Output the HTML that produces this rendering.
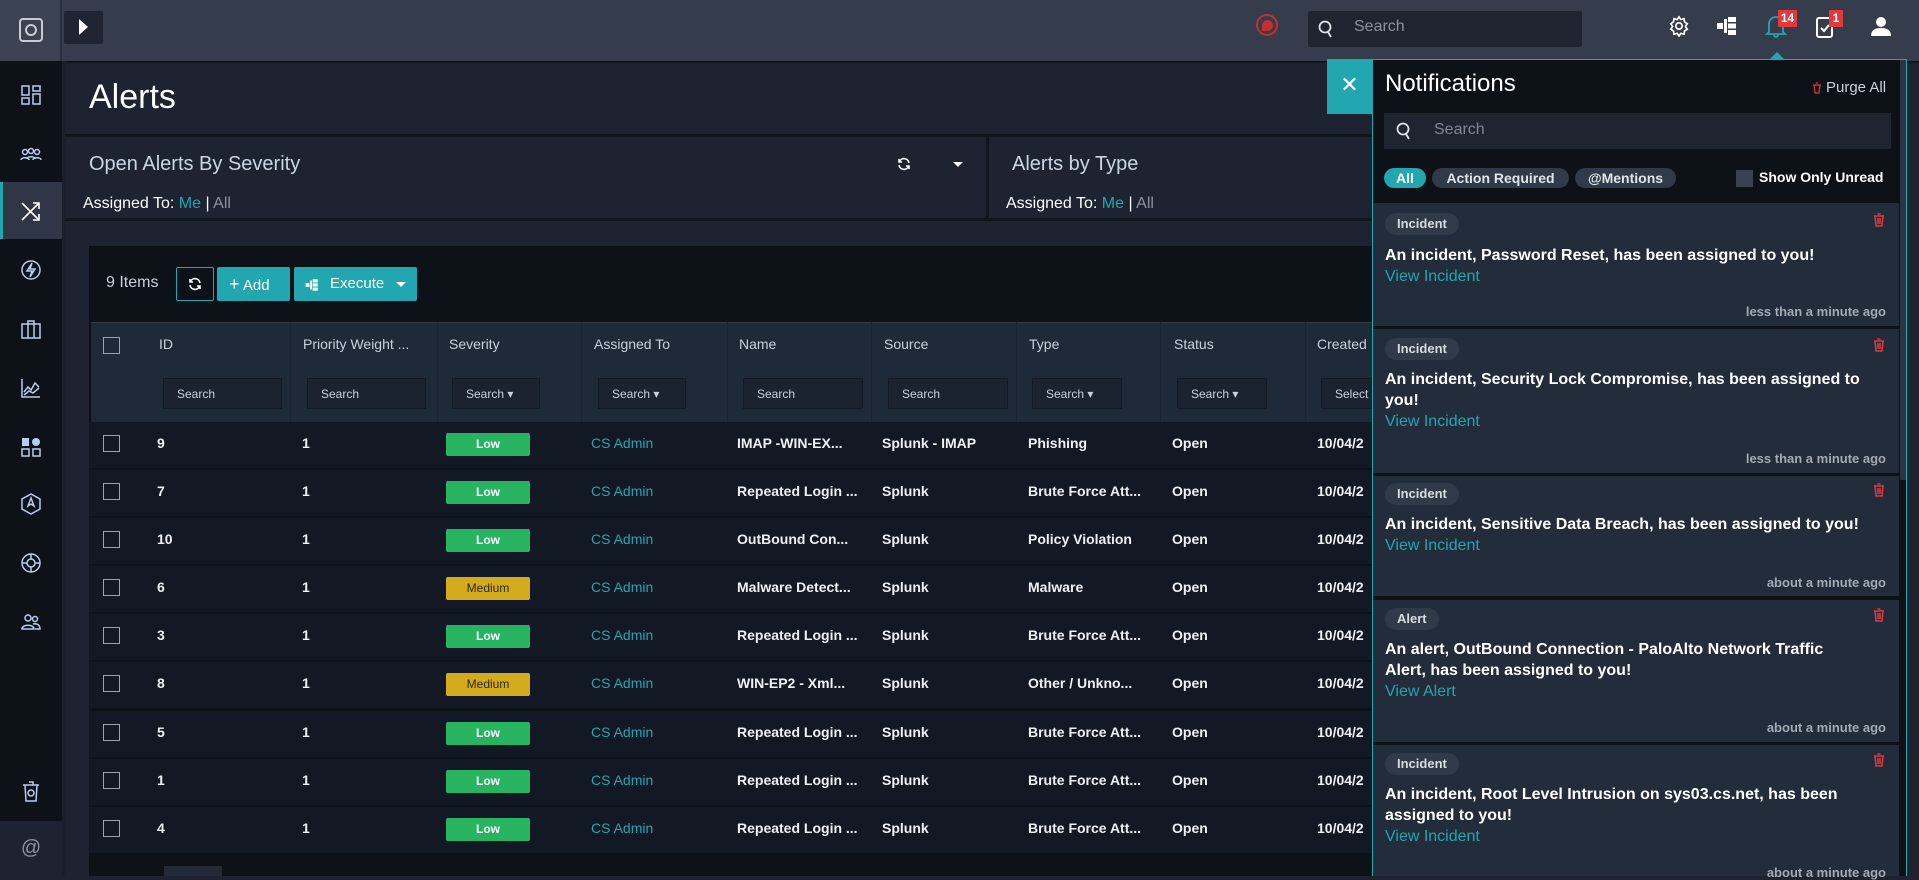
<!DOCTYPE html>
<html><head><meta charset="utf-8"><style>
*{margin:0;padding:0;box-sizing:border-box}
body{width:1919px;height:876px;overflow:hidden;background:#1d2330;font-family:"Liberation Sans",sans-serif;color:#e8ecf1;position:relative}
.a{position:absolute;white-space:nowrap}
.sb{left:0;top:61px;width:62px;height:815px;background:#0d1118}
.ic{position:absolute;left:19px;width:24px;height:24px}
.hdr{color:#c9d1db;font-size:14px}
.srch{position:absolute;top:378px;height:31px;background:#1b2230;border:1px solid #141a24;color:#c9d1db;font-size:12px;padding:8px 13px;white-space:nowrap}
.row{position:absolute;left:89px;width:1300px;height:47px;background:#131924;border-bottom:1px solid #0c1017}
.t{position:absolute;white-space:nowrap;font-weight:bold;font-size:14px;color:#eef1f4}
.cb{position:absolute;left:103px;width:17px;height:17px;border:1px solid #9aa3ae}
.bd{position:absolute;left:446px;width:84px;height:23px;border-radius:2px;font-size:12px;font-weight:bold;text-align:center;line-height:23px}
.low{background:#27b35f;color:#fff}.med{background:#d4ab1d;color:#2a2a10;font-weight:normal}
.card{position:absolute;left:1373px;width:526px;background:#222c3b}
.tag{position:absolute;left:12px;height:22px;padding:0 12px;border-radius:11px;background:#303a48;color:#d7dce2;font-size:13px;font-weight:bold;line-height:22px}
.msg{position:absolute;left:12px;width:480px;font-size:16px;font-weight:bold;line-height:21px;color:#fff}
.lnk{color:#22a6b0;font-weight:normal;display:block}
.tm{position:absolute;right:13px;font-size:13px;font-weight:bold;color:#a3aab4}
.tr{position:absolute;right:14px;width:12px;height:14px}
</style></head><body>
<div class="a" style="left:0;top:0;width:1919px;height:61px;background:#353c4b"></div>
<div class="a" style="left:0;top:0;width:62px;height:61px;background:#3b4251;border-right:2px solid #2a303c"></div>
<div class="a" style="left:19px;top:18px;width:24px;height:24px;border:2px solid #c8ccd2;border-radius:4px"></div>
<div class="a" style="left:25px;top:24px;width:12px;height:12px;border:2px solid #c8ccd2;border-radius:50%"></div>
<div class="a" style="left:64px;top:11px;width:39px;height:33px;background:#1e2431;border-radius:2px"></div>
<div class="a" style="left:79px;top:19px;width:0;height:0;border-left:9px solid #fff;border-top:8px solid transparent;border-bottom:8px solid transparent"></div>
<div class="a" style="left:1256px;top:14px;width:22px;height:22px;border:2px solid #c3302e;border-radius:50%"></div>
<div class="a" style="left:1262px;top:20px;width:11px;height:11px;background:#c3302e;border-radius:50% 50% 50% 0"></div>
<div class="a" style="left:1308px;top:11px;width:274px;height:36px;background:#1e2430;border-radius:2px"></div>
<svg class="a" style="left:1318px;top:20px" width="16" height="18" viewBox="0 0 16 18" fill="none" stroke="#e0e3e7" stroke-width="1.8"><circle cx="7" cy="7" r="5.5"/><path d="M10 12l3 5"/></svg>
<div class="a" style="left:1354px;top:18px;font-size:16px;color:#8c939e">Search</div>
<svg class="a" style="left:1668px;top:15px" width="22" height="22" viewBox="0 0 24 24" fill="none" stroke="#fff" stroke-width="1.8"><circle cx="12" cy="12" r="3.5"/><path d="M12 2l2 3 3.5-1 .5 3.5 3 2-2 3 2 3-3 2-.5 3.5-3.5-1-2 3-2-3-3.5 1-.5-3.5-3-2 2-3-2-3 3-2 .5-3.5 3.5 1z"/></svg>
<svg class="a" style="left:1716px;top:15px" width="22" height="22" viewBox="0 0 22 22" fill="#fff"><rect x="1" y="8" width="6" height="6"/><rect x="12" y="2" width="8" height="5"/><rect x="12" y="8.5" width="8" height="5"/><rect x="12" y="15" width="8" height="5"/><rect x="8" y="4" width="3" height="14"/></svg>
<svg class="a" style="left:1765px;top:14px" width="22" height="24" viewBox="0 0 22 24" fill="none" stroke="#22a6b0" stroke-width="1.8"><path d="M4 18V10a7 7 0 0114 0v8l2 2H2z"/><path d="M9 21a2 2 0 004 0"/></svg>
<div class="a" style="left:1778px;top:10px;width:19px;height:17px;background:#e03a3e;color:#fff;font-size:12px;font-weight:bold;text-align:center;line-height:17px">14</div>
<svg class="a" style="left:1815px;top:15px" width="20" height="24" viewBox="0 0 20 24" fill="none" stroke="#fff" stroke-width="2"><rect x="2" y="3" width="15" height="19" rx="2"/><path d="M6 13l3 3 5-6"/></svg>
<div class="a" style="left:1829px;top:10px;width:14px;height:17px;background:#e03a3e;color:#fff;font-size:12px;font-weight:bold;text-align:center;line-height:17px">1</div>
<svg class="a" style="left:1871px;top:16px" width="20" height="20" viewBox="0 0 20 20" fill="#fff"><circle cx="10" cy="6" r="5"/><path d="M0 20c0-6 4-8 10-8s10 2 10 8z"/></svg>
<div class="a" style="left:0;top:61px;width:1919px;height:2px;background:#11151d"></div>

<div class="a sb"></div>
<div class="a" style="left:62px;top:61px;width:3px;height:815px;background:#1a1f2a"></div>
<div class="a" style="left:0;top:182px;width:62px;height:57px;background:#2f3645;border-left:3px solid #22a6b0"></div>
<svg class="ic" style="top:83px" viewBox="0 0 24 24" fill="none" stroke="#b9cdf0" stroke-width="1.5"><rect x="3" y="3" width="7" height="9"/><rect x="14" y="3" width="7" height="5"/><rect x="3" y="15" width="7" height="6"/><rect x="14" y="11" width="7" height="10"/></svg>
<svg class="ic" style="top:143px" viewBox="0 0 24 24" fill="none" stroke="#b9cdf0" stroke-width="1.5"><circle cx="6" cy="9" r="2.5"/><circle cx="12" cy="8" r="2.5"/><circle cx="18" cy="9" r="2.5"/><path d="M2 17c0-3 8-3 8 0M8 16c0-3 8-3 8 0M14 17c0-3 8-3 8 0"/></svg>
<svg class="ic" style="top:199px" viewBox="0 0 24 24" fill="none" stroke="#fff" stroke-width="1.6"><path d="M3 4l17 17M3 21L20 4M14 4h6v6M14 21h6v-6"/></svg>
<svg class="ic" style="top:258px" viewBox="0 0 24 24" fill="none" stroke="#b9cdf0" stroke-width="1.5"><circle cx="12" cy="12" r="9"/><path d="M13 5l-5 8h5l-2 6 5-8h-5z"/></svg>
<svg class="ic" style="top:317px" viewBox="0 0 24 24" fill="none" stroke="#b9cdf0" stroke-width="1.5"><rect x="3" y="7" width="18" height="14"/><path d="M9 7V4h6v3M9 7v14M15 7v14"/></svg>
<svg class="ic" style="top:376px" viewBox="0 0 24 24" fill="none" stroke="#b9cdf0" stroke-width="1.5"><path d="M3 3v18h18M5 16l4-5 3 3 4-7 4 4M5 19l5-4 4 2 6-5"/></svg>
<svg class="ic" style="top:435px" viewBox="0 0 24 24" fill="#b9cdf0"><rect x="3" y="3" width="7" height="8"/><circle cx="17" cy="7" r="4"/><rect x="3" y="14" width="7" height="7" fill="none" stroke="#b9cdf0" stroke-width="1.5"/><rect x="14" y="14" width="7" height="7" fill="none" stroke="#b9cdf0" stroke-width="1.5"/></svg>
<svg class="ic" style="top:492px" viewBox="0 0 24 24" fill="none" stroke="#b9cdf0" stroke-width="1.5"><path d="M12 2l9 5v10l-9 5-9-5V7z"/><path d="M12 6l3 8-3-2-3 2z"/></svg>
<svg class="ic" style="top:551px" viewBox="0 0 24 24" fill="none" stroke="#b9cdf0" stroke-width="1.5"><circle cx="12" cy="12" r="9"/><circle cx="12" cy="12" r="4"/><path d="M12 3v5M12 16v5M3 12h5M16 12h5"/></svg>
<svg class="ic" style="top:610px" viewBox="0 0 24 24" fill="none" stroke="#b9cdf0" stroke-width="1.5"><circle cx="9" cy="8" r="3"/><circle cx="16" cy="9" r="2.5"/><path d="M3 19c0-5 12-5 12 0zM14 14c4-1 7 1 7 5h-5"/></svg>
<svg class="ic" style="top:779px" viewBox="0 0 24 24" fill="none" stroke="#b9cdf0" stroke-width="1.5"><path d="M6 6h12l-1 16H7zM4 6h16M10 3h4v3"/><circle cx="12" cy="14" r="3"/></svg>
<div class="a" style="left:0;top:821px;width:62px;height:55px;background:#1d2330;color:#8c939e;font-size:20px;text-align:center;line-height:55px">@</div>

<div class="a" style="left:65px;top:63px;width:1310px;height:72px;background:#1d2330"></div>
<div class="a" style="left:89px;top:78px;font-size:34px;color:#fff">Alerts</div>
<div class="a" style="left:65px;top:134px;width:1310px;height:3px;background:#11151d"></div>
<div class="a" style="left:65px;top:218px;width:1310px;height:3px;background:#11151d"></div>
<div class="a" style="left:986px;top:137px;width:3px;height:81px;background:#11151d"></div>
<div class="a" style="left:89px;top:153px;font-size:20px;color:#c9d6e6">Open Alerts By Severity</div>
<div class="a" style="left:83px;top:195px;font-size:16px;color:#fff">Assigned To: <span style="color:#22a6b0">Me</span> | <span style="color:#8c939e">All</span></div>
<svg class="a" style="left:897px;top:157px" width="14" height="14" viewBox="0 0 14 14" fill="none" stroke="#fff" stroke-width="1.6"><path d="M12 6A5 5 0 002.5 4.5M2 8a5 5 0 009.5 1.5"/><path d="M2 2v3h3M12 12V9H9"/></svg>
<div class="a" style="left:953px;top:162px;border-top:5px solid #fff;border-left:5px solid transparent;border-right:5px solid transparent"></div>
<div class="a" style="left:1012px;top:153px;font-size:20px;color:#c9d6e6">Alerts by Type</div>
<div class="a" style="left:1006px;top:195px;font-size:16px;color:#fff">Assigned To: <span style="color:#22a6b0">Me</span> | <span style="color:#8c939e">All</span></div>

<div class="a" style="left:89px;top:246px;width:1300px;height:630px;background:#0d1118"></div>
<div class="a" style="left:106px;top:274px;font-size:16px;color:#c9d1db">9 Items</div>
<div class="a" style="left:176px;top:267px;width:38px;height:34px;border:1px solid #22a6b0;border-radius:2px"></div>
<svg class="a" style="left:188px;top:277px" width="14" height="14" viewBox="0 0 14 14" fill="none" stroke="#fff" stroke-width="1.6"><path d="M12 6A5 5 0 002.5 4.5M2 8a5 5 0 009.5 1.5"/><path d="M2 2v3h3M12 12V9H9"/></svg>
<div class="a" style="left:217px;top:267px;width:73px;height:34px;background:#22a6b0;border-radius:2px;color:#fff;font-size:15px;line-height:34px;padding-left:12px"><b style="font-size:18px;font-weight:normal">+</b> Add</div>
<div class="a" style="left:294px;top:267px;width:123px;height:34px;background:#22a6b0;border-radius:2px;color:#fff;font-size:15px;line-height:34px;padding-left:36px">Execute</div>
<svg class="a" style="left:304px;top:278px" width="16" height="14" viewBox="0 0 22 22" fill="#fff"><rect x="1" y="8" width="6" height="6"/><rect x="12" y="2" width="8" height="5"/><rect x="12" y="8.5" width="8" height="5"/><rect x="12" y="15" width="8" height="5"/><rect x="8" y="4" width="3" height="14"/></svg>
<div class="a" style="left:396px;top:282px;border-top:5px solid #fff;border-left:5px solid transparent;border-right:5px solid transparent"></div>

<div class="a" style="left:91px;top:322px;width:1298px;height:100px;background:#1f2a38;border-top:1px solid #2e3a4a"></div>
<div class="a" style="left:290px;top:322px;width:1px;height:100px;background:#1a2330"></div>
<div class="a" style="left:437px;top:322px;width:1px;height:100px;background:#1a2330"></div>
<div class="a" style="left:581px;top:322px;width:1px;height:100px;background:#1a2330"></div>
<div class="a" style="left:727px;top:322px;width:1px;height:100px;background:#1a2330"></div>
<div class="a" style="left:871px;top:322px;width:1px;height:100px;background:#1a2330"></div>
<div class="a" style="left:1016px;top:322px;width:1px;height:100px;background:#1a2330"></div>
<div class="a" style="left:1160px;top:322px;width:1px;height:100px;background:#1a2330"></div>
<div class="a" style="left:1305px;top:322px;width:1px;height:100px;background:#1a2330"></div>
<div class="cb" style="top:337px"></div>
<div class="a hdr" style="left:159px;top:336px">ID</div>
<div class="a hdr" style="left:303px;top:336px">Priority Weight ...</div>
<div class="a hdr" style="left:449px;top:336px">Severity</div>
<div class="a hdr" style="left:594px;top:336px">Assigned To</div>
<div class="a hdr" style="left:739px;top:336px">Name</div>
<div class="a hdr" style="left:884px;top:336px">Source</div>
<div class="a hdr" style="left:1029px;top:336px">Type</div>
<div class="a hdr" style="left:1174px;top:336px">Status</div>
<div class="a hdr" style="left:1317px;top:336px">Created</div>
<div class="srch" style="left:163px;width:119px">Search</div>
<div class="srch" style="left:307px;width:119px">Search</div>
<div class="srch" style="left:452px;width:88px">Search ▾</div>
<div class="srch" style="left:598px;width:88px">Search ▾</div>
<div class="srch" style="left:743px;width:120px">Search</div>
<div class="srch" style="left:888px;width:120px">Search</div>
<div class="srch" style="left:1032px;width:90px">Search ▾</div>
<div class="srch" style="left:1177px;width:90px">Search ▾</div>
<div class="srch" style="left:1321px;width:60px">Select</div>

<div class="row" style="top:422px"></div><div class="row" style="top:470px"></div><div class="row" style="top:518px"></div>
<div class="row" style="top:566px"></div><div class="row" style="top:614px"></div><div class="row" style="top:662px"></div>
<div class="row" style="top:711px"></div><div class="row" style="top:759px"></div><div class="row" style="top:807px"></div>
<div class="a" style="left:164px;top:866px;width:58px;height:10px;background:#222a37"></div>

<div class="cb" style="top:435px"></div><div class="t" style="left:157px;top:435px">9</div><div class="t" style="left:302px;top:435px">1</div><div class="bd low" style="top:433px">Low</div><div class="t" style="left:591px;top:435px;font-weight:normal;color:#22a6b0">CS Admin</div><div class="t" style="left:737px;top:435px">IMAP -WIN-EX...</div><div class="t" style="left:882px;top:435px">Splunk - IMAP</div><div class="t" style="left:1028px;top:435px">Phishing</div><div class="t" style="left:1172px;top:435px">Open</div><div class="t" style="left:1317px;top:435px">10/04/2</div>
<div class="cb" style="top:483px"></div><div class="t" style="left:157px;top:483px">7</div><div class="t" style="left:302px;top:483px">1</div><div class="bd low" style="top:481px">Low</div><div class="t" style="left:591px;top:483px;font-weight:normal;color:#22a6b0">CS Admin</div><div class="t" style="left:737px;top:483px">Repeated Login ...</div><div class="t" style="left:882px;top:483px">Splunk</div><div class="t" style="left:1028px;top:483px">Brute Force Att...</div><div class="t" style="left:1172px;top:483px">Open</div><div class="t" style="left:1317px;top:483px">10/04/2</div>
<div class="cb" style="top:531px"></div><div class="t" style="left:157px;top:531px">10</div><div class="t" style="left:302px;top:531px">1</div><div class="bd low" style="top:529px">Low</div><div class="t" style="left:591px;top:531px;font-weight:normal;color:#22a6b0">CS Admin</div><div class="t" style="left:737px;top:531px">OutBound Con...</div><div class="t" style="left:882px;top:531px">Splunk</div><div class="t" style="left:1028px;top:531px">Policy Violation</div><div class="t" style="left:1172px;top:531px">Open</div><div class="t" style="left:1317px;top:531px">10/04/2</div>
<div class="cb" style="top:579px"></div><div class="t" style="left:157px;top:579px">6</div><div class="t" style="left:302px;top:579px">1</div><div class="bd med" style="top:577px">Medium</div><div class="t" style="left:591px;top:579px;font-weight:normal;color:#22a6b0">CS Admin</div><div class="t" style="left:737px;top:579px">Malware Detect...</div><div class="t" style="left:882px;top:579px">Splunk</div><div class="t" style="left:1028px;top:579px">Malware</div><div class="t" style="left:1172px;top:579px">Open</div><div class="t" style="left:1317px;top:579px">10/04/2</div>
<div class="cb" style="top:627px"></div><div class="t" style="left:157px;top:627px">3</div><div class="t" style="left:302px;top:627px">1</div><div class="bd low" style="top:625px">Low</div><div class="t" style="left:591px;top:627px;font-weight:normal;color:#22a6b0">CS Admin</div><div class="t" style="left:737px;top:627px">Repeated Login ...</div><div class="t" style="left:882px;top:627px">Splunk</div><div class="t" style="left:1028px;top:627px">Brute Force Att...</div><div class="t" style="left:1172px;top:627px">Open</div><div class="t" style="left:1317px;top:627px">10/04/2</div>
<div class="cb" style="top:675px"></div><div class="t" style="left:157px;top:675px">8</div><div class="t" style="left:302px;top:675px">1</div><div class="bd med" style="top:673px">Medium</div><div class="t" style="left:591px;top:675px;font-weight:normal;color:#22a6b0">CS Admin</div><div class="t" style="left:737px;top:675px">WIN-EP2 - Xml...</div><div class="t" style="left:882px;top:675px">Splunk</div><div class="t" style="left:1028px;top:675px">Other / Unkno...</div><div class="t" style="left:1172px;top:675px">Open</div><div class="t" style="left:1317px;top:675px">10/04/2</div>
<div class="cb" style="top:724px"></div><div class="t" style="left:157px;top:724px">5</div><div class="t" style="left:302px;top:724px">1</div><div class="bd low" style="top:722px">Low</div><div class="t" style="left:591px;top:724px;font-weight:normal;color:#22a6b0">CS Admin</div><div class="t" style="left:737px;top:724px">Repeated Login ...</div><div class="t" style="left:882px;top:724px">Splunk</div><div class="t" style="left:1028px;top:724px">Brute Force Att...</div><div class="t" style="left:1172px;top:724px">Open</div><div class="t" style="left:1317px;top:724px">10/04/2</div>
<div class="cb" style="top:772px"></div><div class="t" style="left:157px;top:772px">1</div><div class="t" style="left:302px;top:772px">1</div><div class="bd low" style="top:770px">Low</div><div class="t" style="left:591px;top:772px;font-weight:normal;color:#22a6b0">CS Admin</div><div class="t" style="left:737px;top:772px">Repeated Login ...</div><div class="t" style="left:882px;top:772px">Splunk</div><div class="t" style="left:1028px;top:772px">Brute Force Att...</div><div class="t" style="left:1172px;top:772px">Open</div><div class="t" style="left:1317px;top:772px">10/04/2</div>
<div class="cb" style="top:820px"></div><div class="t" style="left:157px;top:820px">4</div><div class="t" style="left:302px;top:820px">1</div><div class="bd low" style="top:818px">Low</div><div class="t" style="left:591px;top:820px;font-weight:normal;color:#22a6b0">CS Admin</div><div class="t" style="left:737px;top:820px">Repeated Login ...</div><div class="t" style="left:882px;top:820px">Splunk</div><div class="t" style="left:1028px;top:820px">Brute Force Att...</div><div class="t" style="left:1172px;top:820px">Open</div><div class="t" style="left:1317px;top:820px">10/04/2</div>

<div class="a" style="left:1327px;top:59px;width:45px;height:55px;background:#22a6b0;color:#fff;font-size:22px;text-align:center;line-height:52px">✕</div>
<div class="a" style="left:1770px;top:52px;border-bottom:7px solid #22a6b0;border-left:7px solid transparent;border-right:7px solid transparent"></div>
<div class="a" style="left:1372px;top:59px;width:535px;height:817px;background:#0d1118;border:1px solid #22a6b0;border-bottom:none"></div>
<div class="a" style="left:1900px;top:60px;width:6px;height:420px;background:#2e3542"></div>
<div class="a" style="left:1385px;top:70px;font-size:24px;color:#fff">Notifications</div>
<svg class="a" style="left:1812px;top:82px" width="10" height="12" viewBox="0 0 10 12" fill="none" stroke="#c3302e" stroke-width="1.5"><path d="M1 3h8M2 3l1 8h4l1-8M4 1h2"/></svg>
<div class="a" style="left:1826px;top:79px;font-size:15px;color:#c9d1db">Purge All</div>
<div class="a" style="left:1384px;top:113px;width:507px;height:36px;background:#1e2430"></div>
<svg class="a" style="left:1396px;top:122px" width="16" height="18" viewBox="0 0 16 18" fill="none" stroke="#e0e3e7" stroke-width="1.8"><circle cx="7" cy="7" r="5.5"/><path d="M10 12l3 5"/></svg>
<div class="a" style="left:1434px;top:121px;font-size:16px;color:#7f8792">Search</div>
<div class="a" style="left:1384px;top:168px;width:42px;height:20px;background:#22a6b0;border-radius:10px;color:#fff;font-size:14px;font-weight:bold;text-align:center;line-height:20px">All</div>
<div class="a" style="left:1432px;top:168px;width:137px;height:20px;background:#303a48;border-radius:10px;color:#e1e5ea;font-size:14px;font-weight:bold;text-align:center;line-height:20px">Action Required</div>
<div class="a" style="left:1575px;top:168px;width:101px;height:20px;background:#303a48;border-radius:10px;color:#e1e5ea;font-size:14px;font-weight:bold;text-align:center;line-height:20px">@Mentions</div>
<div class="a" style="left:1736px;top:170px;width:17px;height:17px;background:#3a4250"></div>
<div class="a" style="left:1759px;top:169px;font-size:14px;font-weight:bold;color:#fff">Show Only Unread</div>

<div class="card" style="top:203px;height:123px"><div class="tag" style="top:10px">Incident</div><svg class="tr" style="top:10px" viewBox="0 0 12 14" fill="none" stroke="#e03a3e" stroke-width="1.5"><path d="M1 3h10M2 3l1 10h6l1-10M4.5 1h3M5 5v6M7 5v6"/></svg><div class="msg" style="top:42px;width:510px">An incident, Password Reset, has been assigned to you!<span class="lnk">View Incident</span></div><div class="tm" style="top:101px">less than a minute ago</div></div>
<div class="card" style="top:329px;height:144px"><div class="tag" style="top:9px">Incident</div><svg class="tr" style="top:9px" viewBox="0 0 12 14" fill="none" stroke="#e03a3e" stroke-width="1.5"><path d="M1 3h10M2 3l1 10h6l1-10M4.5 1h3M5 5v6M7 5v6"/></svg><div class="msg" style="top:40px">An incident, Security Lock Compromise, has been assigned to you!<span class="lnk">View Incident</span></div><div class="tm" style="top:122px">less than a minute ago</div></div>
<div class="card" style="top:476px;height:120px"><div class="tag" style="top:7px">Incident</div><svg class="tr" style="top:7px" viewBox="0 0 12 14" fill="none" stroke="#e03a3e" stroke-width="1.5"><path d="M1 3h10M2 3l1 10h6l1-10M4.5 1h3M5 5v6M7 5v6"/></svg><div class="msg" style="top:38px;width:510px">An incident, Sensitive Data Breach, has been assigned to you!<span class="lnk">View Incident</span></div><div class="tm" style="top:99px">about a minute ago</div></div>
<div class="card" style="top:600px;height:142px"><div class="tag" style="top:8px">Alert</div><svg class="tr" style="top:8px" viewBox="0 0 12 14" fill="none" stroke="#e03a3e" stroke-width="1.5"><path d="M1 3h10M2 3l1 10h6l1-10M4.5 1h3M5 5v6M7 5v6"/></svg><div class="msg" style="top:39px">An alert, OutBound Connection - PaloAlto Network Traffic Alert, has been assigned to you!<span class="lnk">View Alert</span></div><div class="tm" style="top:120px">about a minute ago</div></div>
<div class="card" style="top:745px;height:131px"><div class="tag" style="top:8px">Incident</div><svg class="tr" style="top:8px" viewBox="0 0 12 14" fill="none" stroke="#e03a3e" stroke-width="1.5"><path d="M1 3h10M2 3l1 10h6l1-10M4.5 1h3M5 5v6M7 5v6"/></svg><div class="msg" style="top:39px">An incident, Root Level Intrusion on sys03.cs.net, has been assigned to you!<span class="lnk">View Incident</span></div><div class="tm" style="top:120px">about a minute ago</div></div>
</body></html>
